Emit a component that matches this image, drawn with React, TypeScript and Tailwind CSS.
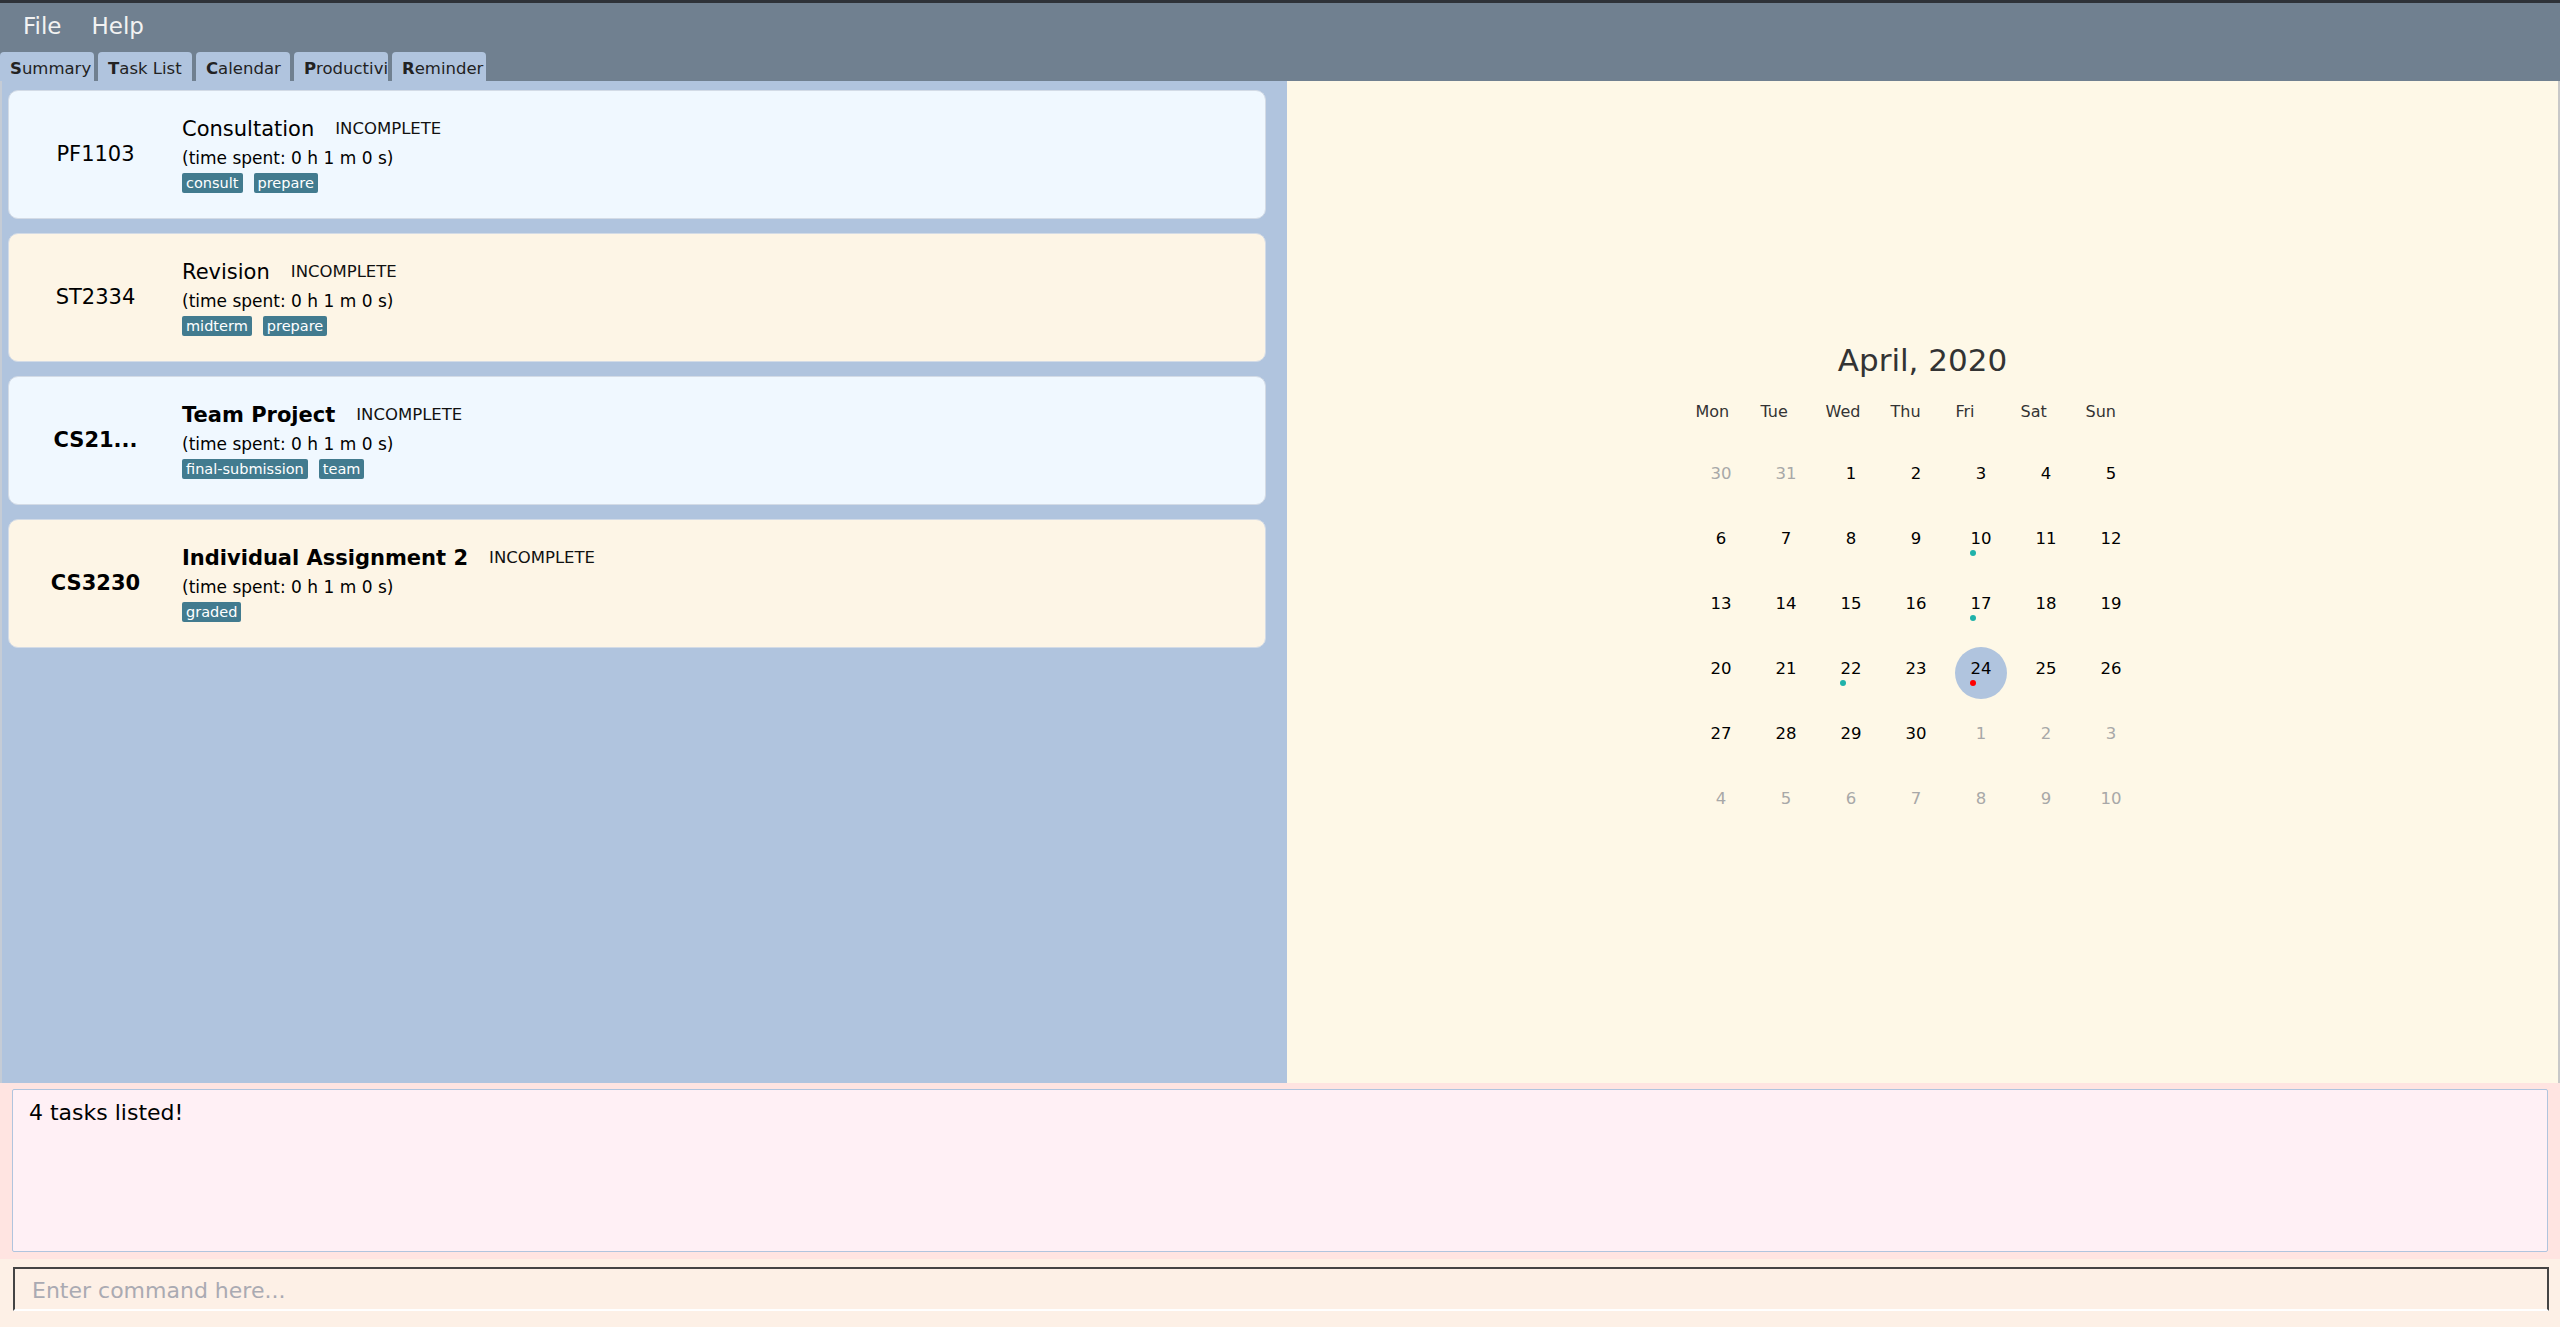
import React from "react";

type Task = {
  code: string;
  title: string;
  tags: string[];
  bold?: boolean;
  bg: string;
};

const tasks: Task[] = [
  { code: "PF1103", title: "Consultation", tags: ["consult", "prepare"], bg: "bg-[#f0f8ff]" },
  { code: "ST2334", title: "Revision", tags: ["midterm", "prepare"], bg: "bg-[#fdf5e6]" },
  { code: "CS21...", title: "Team Project", tags: ["final-submission", "team"], bold: true, bg: "bg-[#f0f8ff]" },
  { code: "CS3230", title: "Individual Assignment 2", tags: ["graded"], bold: true, bg: "bg-[#fdf5e6]" },
];

const tabs = ["Summary", "Task List", "Calendar", "Productivity", "Reminder"];
const weekDays = ["Mon", "Tue", "Wed", "Thu", "Fri", "Sat", "Sun"];

type Day = { n: number; other?: boolean; dot?: "teal" | "red"; today?: boolean };

const days: Day[] = [
  { n: 30, other: true }, { n: 31, other: true }, { n: 1 }, { n: 2 }, { n: 3 }, { n: 4 }, { n: 5 },
  { n: 6 }, { n: 7 }, { n: 8 }, { n: 9 }, { n: 10, dot: "teal" }, { n: 11 }, { n: 12 },
  { n: 13 }, { n: 14 }, { n: 15 }, { n: 16 }, { n: 17, dot: "teal" }, { n: 18 }, { n: 19 },
  { n: 20 }, { n: 21 }, { n: 22, dot: "teal" }, { n: 23 }, { n: 24, dot: "red", today: true }, { n: 25 }, { n: 26 },
  { n: 27 }, { n: 28 }, { n: 29 }, { n: 30 }, { n: 1, other: true }, { n: 2, other: true }, { n: 3, other: true },
  { n: 4, other: true }, { n: 5, other: true }, { n: 6, other: true }, { n: 7, other: true }, { n: 8, other: true }, { n: 9, other: true }, { n: 10, other: true },
];

function TaskCard({ task }: { task: Task }) {
  return (
    <div className={`flex h-[129px] items-center rounded-[10px] border border-[#d3dbe6] ${task.bg}`}>
      <div className={`w-[173px] shrink-0 text-center text-[21px] text-black ${task.bold ? "font-bold" : ""}`}>
        {task.code}
      </div>
      <div className="flex flex-col">
        <div className="flex h-[26px] items-center gap-[21px]">
          <span className={`text-[21px] text-black ${task.bold ? "font-bold" : ""}`}>{task.title}</span>
          <span className="text-[16.5px] text-[#111]">INCOMPLETE</span>
        </div>
        <div className="mt-[4px] h-[22px] text-[17px] leading-[22px] text-black">(time spent: 0 h 1 m 0 s)</div>
        <div className="mt-[4px] flex gap-[11px]">
          {task.tags.map((t) => (
            <span key={t} className="h-[20px] rounded-[2px] bg-[#427b8f] px-[4px] text-[14.5px] leading-[20px] text-white">
              {t}
            </span>
          ))}
        </div>
      </div>
    </div>
  );
}

function Calendar() {
  return (
    <div className="flex flex-col items-center pt-[259px]">
      <div className="h-[40px] text-[31px] leading-[40px] text-[#333]">April, 2020</div>
      <div className="mr-[13px] mt-[22px] grid w-[455px] grid-cols-7">
        {weekDays.map((d) => (
          <div key={d} className="h-[20px] pl-[7px] text-[16px] leading-[20px] text-[#333]">
            {d}
          </div>
        ))}
      </div>
      <div className="mr-[13px] mt-[20px] grid w-[455px] grid-cols-7">
        {days.map((d, i) => (
          <div key={i} className="relative flex h-[65px] items-center justify-center">
            {d.today && (
              <div className="absolute left-[6.5px] top-[9.5px] h-[52px] w-[52px] rounded-full bg-[#b0c4de]" />
            )}
            <span className={`relative text-[16.5px] ${d.other ? "text-[#a8a8a8]" : "text-black"}`}>{d.n}</span>
            {d.dot && (
              <span
                className={`absolute left-[21px] top-[43px] h-[6px] w-[6px] rounded-full ${d.dot === "teal" ? "bg-[#20b2aa]" : "bg-[#ff0000]"}`}
              />
            )}
          </div>
        ))}
      </div>
    </div>
  );
}

export default function App() {
  return (
    <div className="flex h-[1327px] w-[2560px] flex-col overflow-hidden font-['DejaVu_Sans',sans-serif]">
      <div className="h-[3px] bg-[#2e3238]" />
      <div className="flex h-[49px] items-center gap-[30px] bg-[#708090] pb-[3px] pl-[23px] text-[23px] text-[#f2f2f2]">
        <span>File</span>
        <span>Help</span>
      </div>
      <div className="flex h-[29px] gap-[4px] bg-[#708090]">
        {tabs.map((t) => (
          <div key={t} className="h-[29px] w-[94px] overflow-hidden whitespace-nowrap rounded-t-[4px] bg-[#b0c4de] pl-[10px] pt-[7px] text-[16.5px] leading-[20px] text-[#222]">
            <span className="font-bold">{t[0]}</span>
            {t.slice(1)}
          </div>
        ))}
      </div>
      <div className="flex h-[1002px]">
        <div className="flex w-[1287px] shrink-0 flex-col gap-[14px] border-l-[2px] border-[#c5ccd6] bg-[#b0c4de] pl-[6px] pr-[21px] pt-[9px]">
          {tasks.map((t) => (
            <TaskCard key={t.code} task={t} />
          ))}
        </div>
        <div className="flex-1 border-r-[2px] border-[#c8c8c8] bg-[#fef8e7]">
          <Calendar />
        </div>
      </div>
      <div className="h-[176px] bg-[#ffe4e1] px-[12px] pt-[6px]">
        <div className="h-[163px] rounded-[2px] border border-[#b0c4de] bg-[#fff0f5] pl-[16px] pt-[8px] text-[22px] leading-[30px] text-black">
          4 tasks listed!
        </div>
      </div>
      <div className="flex-1 bg-[#fdf0e6] pl-[13px] pr-[11px] pt-[8px]">
        <div className="flex h-[44px] items-center border-x-2 border-t-2 border-b-2 border-[#444] border-b-white pl-[17px] pt-[2px] text-[22px] text-[#aaaab2]">
          Enter command here...
        </div>
      </div>
    </div>
  );
}
